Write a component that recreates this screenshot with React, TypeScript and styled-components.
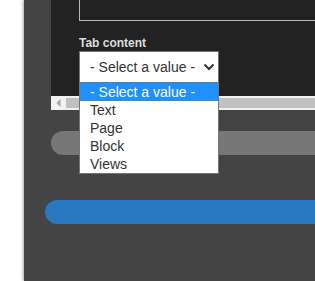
import React from "react";
import styled, { createGlobalStyle } from "styled-components";

const GlobalStyle = createGlobalStyle`
  html, body {
    margin: 0;
    padding: 0;
    background: #ffffff;
    font-family: "Liberation Sans", Arial, sans-serif;
  }
`;

const Page = styled.div`
  display: flex;
  width: 315px;
  height: 281px;
  overflow: hidden;
`;

const Gutter = styled.div`
  flex: 0 0 24px;
  background: #ffffff;
`;

const Panel = styled.div`
  flex: 1;
  display: flex;
  flex-direction: column;
  background: #444444;
  box-shadow: -1px 0 3px rgba(0, 0, 0, 0.35);
  position: relative;
`;

const EditorArea = styled.div`
  margin-left: 27px;
  display: flex;
  flex-direction: column;
`;

const DarkPane = styled.div`
  height: 96px;
  background: #222222;
  display: flex;
  flex-direction: column;
  padding-left: 28px;
  box-sizing: border-box;
`;

const FieldBox = styled.div`
  height: 21px;
  box-sizing: border-box;
  border-left: 1px solid #b8b8b8;
  border-bottom: 1px solid #b8b8b8;
`;

const Label = styled.div`
  margin-top: 15px;
  font-size: 12px;
  line-height: 14px;
  font-weight: bold;
  color: #dddddd;
`;

const SelectWrap = styled.div`
  position: relative;
  margin-top: 1px;
  width: 140px;
`;

const SelectBox = styled.div`
  height: 32px;
  box-sizing: border-box;
  background: #ffffff;
  border: 1px solid #767676;
  display: flex;
  align-items: center;
  justify-content: space-between;
  padding: 0 3px 0 10px;
  font-size: 14px;
  color: #333333;
`;

const OptionList = styled.ul`
  position: absolute;
  top: 32px;
  left: 0;
  width: 140px;
  box-sizing: border-box;
  margin: 0;
  padding: 0;
  list-style: none;
  background: #ffffff;
  border: 1px solid #767676;
  border-top: none;
  z-index: 2;
`;

const Option = styled.li<{ $active?: boolean }>`
  height: 18px;
  line-height: 18px;
  padding-left: 10px;
  font-size: 14px;
  background: ${({ $active }) => ($active ? "#1e90ff" : "transparent")};
  color: ${({ $active }) => ($active ? "#ffffff" : "#333333")};
`;

const Scrollbar = styled.div`
  height: 14px;
  background: #f1f1f1;
  display: flex;
  align-items: center;
`;

const ScrollButton = styled.div`
  flex: 0 0 15px;
  height: 14px;
  display: flex;
  align-items: center;
  justify-content: center;
`;

const Thumb = styled.div`
  flex: 1;
  height: 10px;
  background: #c1c1c1;
`;

const Pill = styled.div<{ $color: string; $indent: number; $gap: number }>`
  margin-top: ${({ $gap }) => $gap}px;
  margin-left: ${({ $indent }) => $indent}px;
  height: 24px;
  border-radius: 12px 0 0 12px;
  background: ${({ $color }) => $color};
`;

const options = ["- Select a value -", "Text", "Page", "Block", "Views"];

export default function App() {
  return (
    <>
      <GlobalStyle />
      <Page>
        <Gutter />
        <Panel>
          <EditorArea>
            <DarkPane>
              <FieldBox />
              <Label>Tab content</Label>
              <SelectWrap>
                <SelectBox>
                  <span>- Select a value -</span>
                  <svg width="12" height="8" viewBox="0 0 12 8">
                    <path
                      d="M1.5 1.5 L6 6 L10.5 1.5"
                      fill="none"
                      stroke="#333"
                      strokeWidth="2"
                    />
                  </svg>
                </SelectBox>
                <OptionList>
                  {options.map((o, i) => (
                    <Option key={o} $active={i === 0}>
                      {o}
                    </Option>
                  ))}
                </OptionList>
              </SelectWrap>
            </DarkPane>
            <Scrollbar>
              <ScrollButton>
                <svg width="5" height="8" viewBox="0 0 5 8">
                  <path d="M4.5 0 L0.5 4 L4.5 8 Z" fill="#a3a3a3" />
                </svg>
              </ScrollButton>
              <Thumb />
            </Scrollbar>
          </EditorArea>
          <Pill $color="#777777" $indent={27} $gap={21} />
          <Pill $color="#2778be" $indent={21} $gap={45} />
        </Panel>
      </Page>
    </>
  );
}
